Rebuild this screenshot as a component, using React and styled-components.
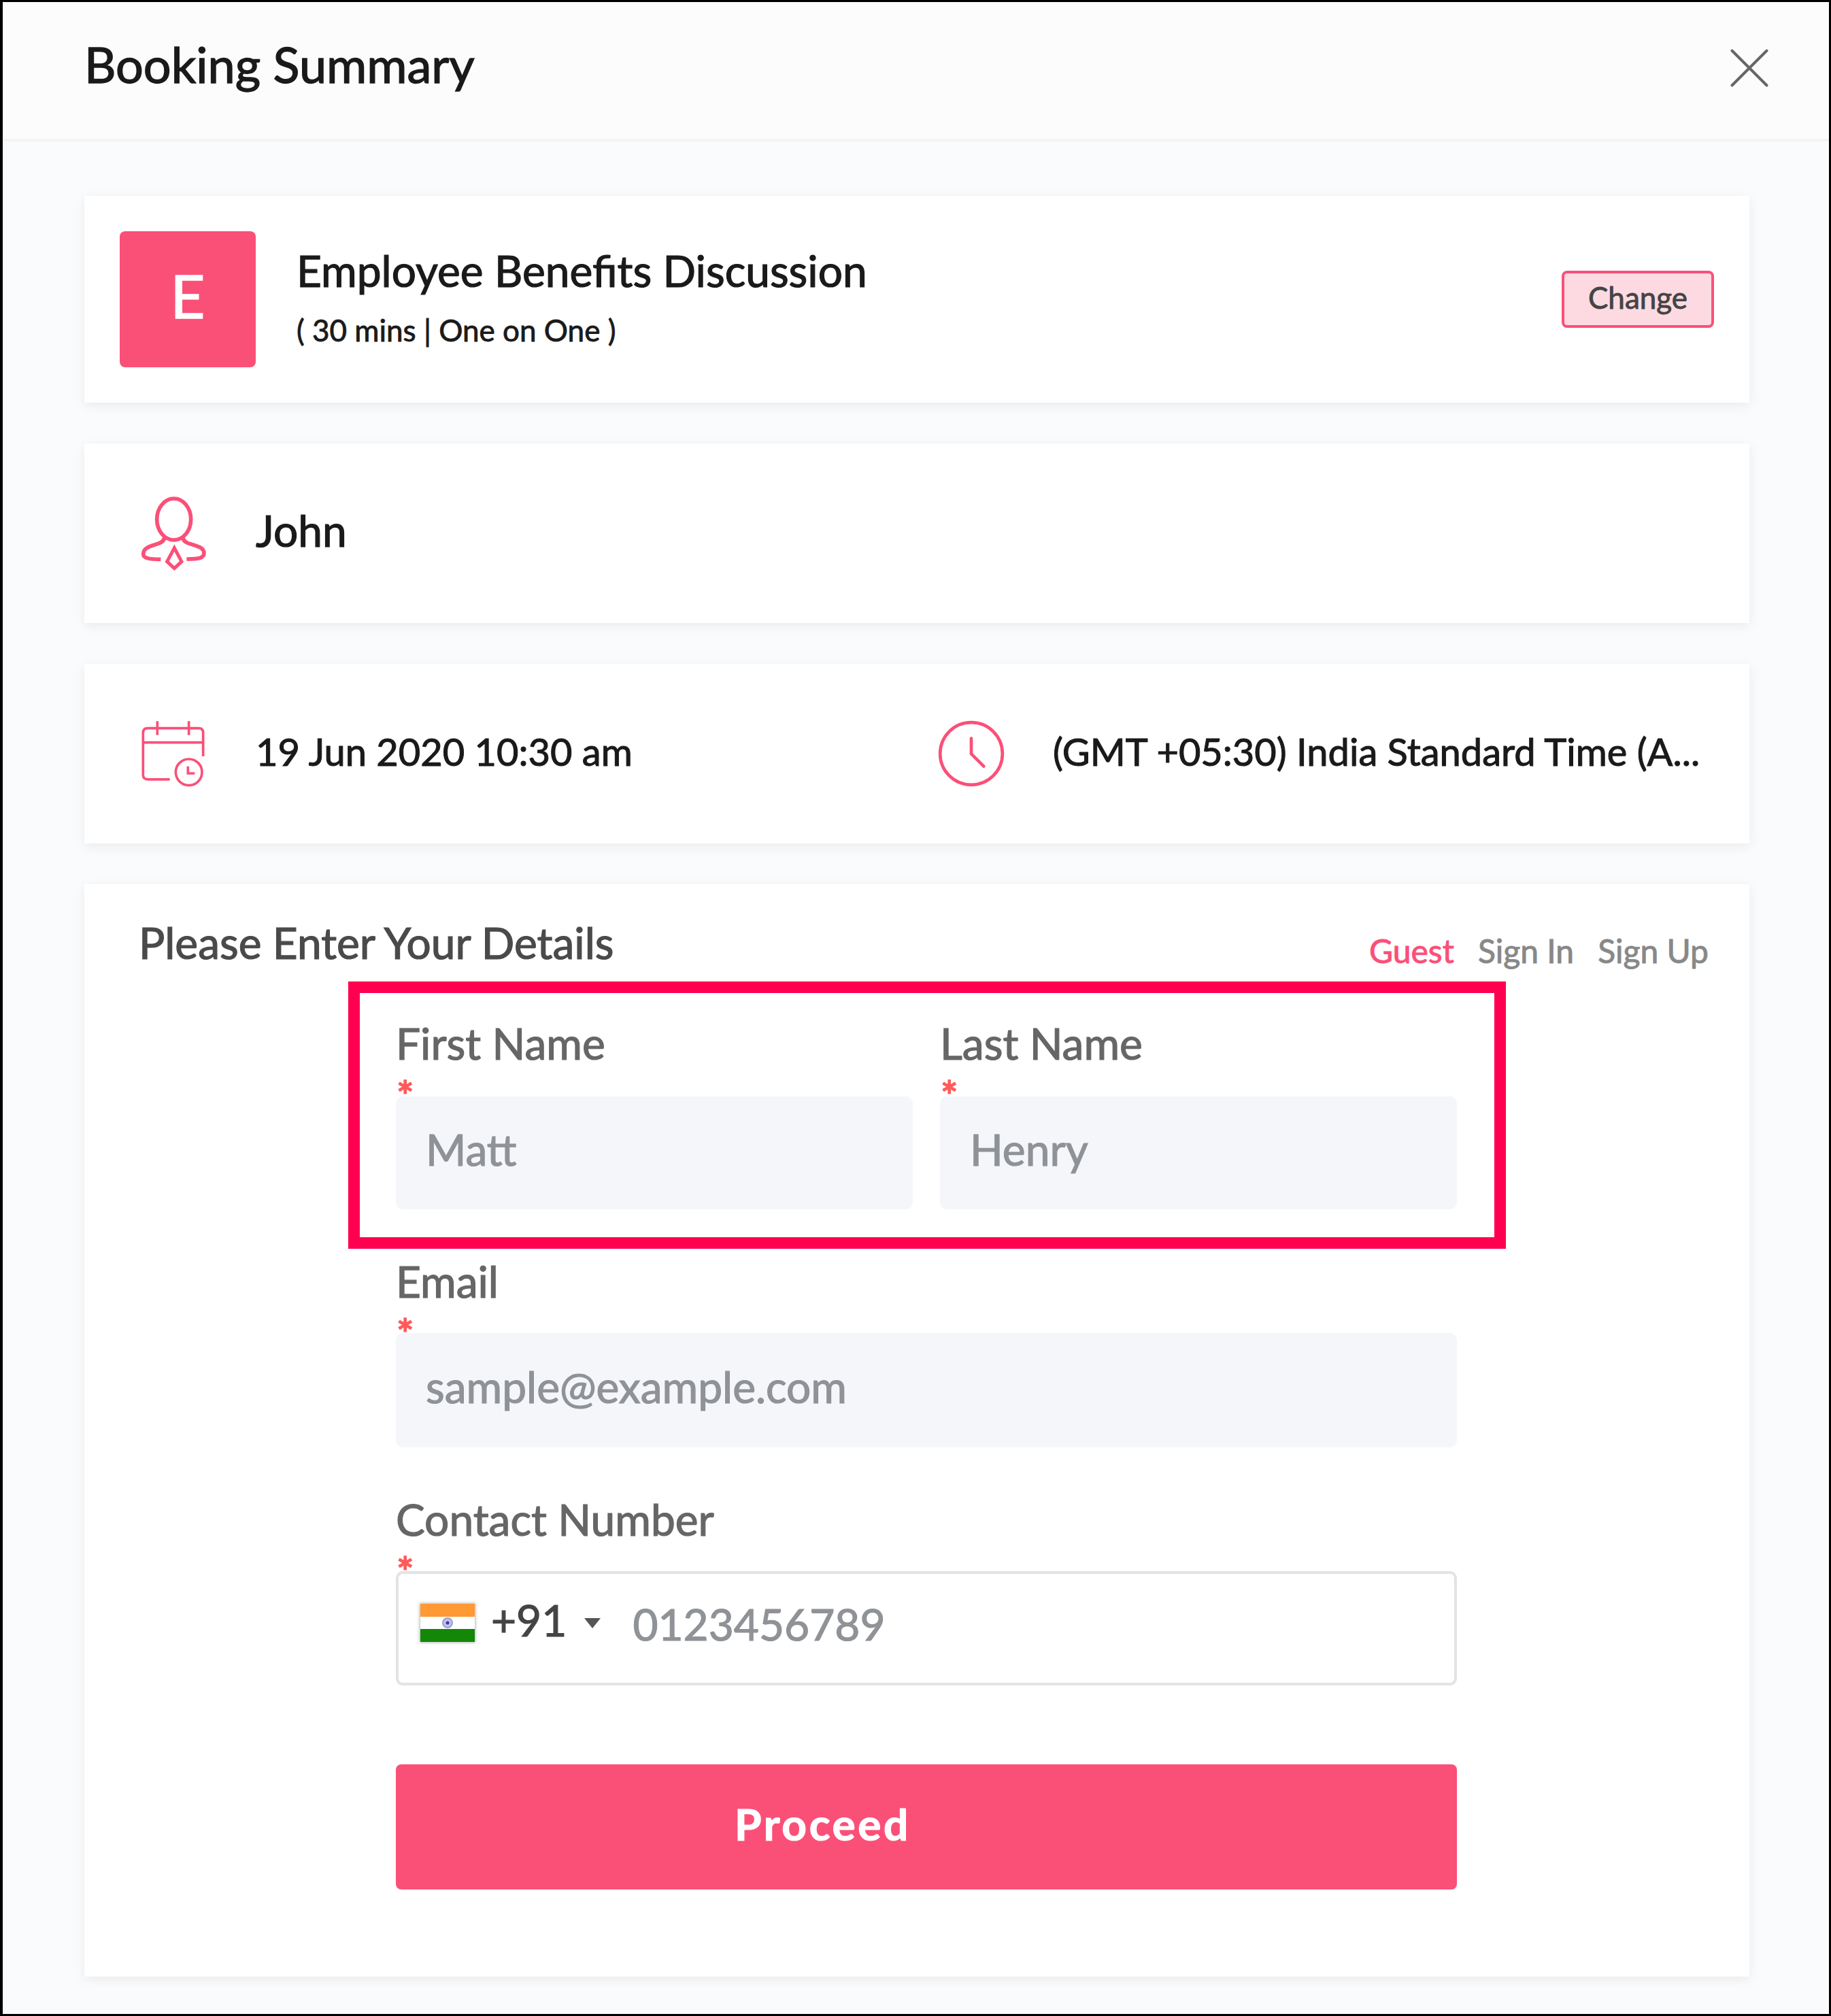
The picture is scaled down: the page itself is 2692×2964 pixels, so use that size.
import React from "react";
import styled, { createGlobalStyle } from "styled-components";

const tabs = ["Guest", "Sign In", "Sign Up"];

const PersonIcon = () => (
  <Icon viewBox="0 0 360 360" strokeWidth="17">
    <ellipse cx="182" cy="130.500" rx="75" ry="91.500" />
    <path d="M140 210C141 250 47 236 47 284C47 303 76 307 124 307" />
    <path d="M222 210C221 250 315 236 315 280C315 303 288 306 238 306" />
    <path d="M184 257L216 317L184 347L152 317Z" strokeWidth="15" />
  </Icon>
);

const CalendarIcon = () => (
  <Icon viewBox="0 0 360 360" strokeWidth="11" $offset="12px">
    <path d="M164 287.500H66Q46 287.500 46 267V82Q46 62 66 62H291Q311 62 311 82V186" />
    <path d="M46 125H311M109 31V92M248 31V92" />
    <circle cx="248" cy="256" r="58" />
    <path d="M244 230V261H274" />
  </Icon>
);

const ClockIcon = () => (
  <Icon viewBox="0 0 360 360" strokeWidth="14" $offset="8px">
    <circle cx="183" cy="180" r="137.500" />
    <path d="M183 113V181L238 236" strokeLinecap="round" />
  </Icon>
);

const IndiaFlag = () => (
  <Flag viewBox="0 0 80 56">
    <rect width="80" height="56" fill="#fff" />
    <rect width="80" height="19" fill="#ff9933" />
    <rect y="37" width="80" height="19" fill="#138808" />
    <circle cx="40" cy="28" r="7" fill="#c3c3e8" stroke="#9c9cd2" strokeWidth="2" />
    <circle cx="40" cy="28" r="2.500" fill="#3c3ca8" />
  </Flag>
);

const Field = ({ label, placeholder, first }) => (
  <FieldGroup>
    <Label>{label}</Label>
    <Required $first={first}>*</Required>
    <Input placeholder={placeholder} $short={first} />
  </FieldGroup>
);

const App = () => (
  <>
    <GlobalStyle />
    <Modal>
      <Header>
        <Title>Booking Summary</Title>
        <CloseButton aria-label="Close">
          <svg width="56" height="56" viewBox="0 0 56 56">
            <path
              d="M2.500 2.500L53.500 53.500M53.500 2.500L2.500 53.500"
              stroke="#666"
              strokeWidth="4"
              strokeLinecap="round"
            />
          </svg>
        </CloseButton>
      </Header>
      <Content>
        <ServiceCard>
          <Avatar>E</Avatar>
          <Service>
            <ServiceName>Employee Benefits Discussion</ServiceName>
            <ServiceInfo>( 30 mins | One on One )</ServiceInfo>
          </Service>
          <ChangeButton>Change</ChangeButton>
        </ServiceCard>
        <InfoCard>
          <InfoItem>
            <PersonIcon />
            <StaffName>John</StaffName>
          </InfoItem>
        </InfoCard>
        <InfoCard>
          <InfoItem>
            <CalendarIcon />
            <InfoText>19 Jun 2020 10:30 am</InfoText>
          </InfoItem>
          <InfoItem>
            <ClockIcon />
            <InfoText>(GMT +05:30) India Standard Time (A...</InfoText>
          </InfoItem>
        </InfoCard>
        <DetailsCard>
          <DetailsHeader>
            <DetailsTitle>Please Enter Your Details</DetailsTitle>
            <Tabs>
              {tabs.map(tab => (
                <Tab key={tab} $active={tab === "Guest"}>
                  {tab}
                </Tab>
              ))}
            </Tabs>
          </DetailsHeader>
          <Form>
            <NameRow>
              <Field label="First Name" placeholder="Matt" first />
              <Field label="Last Name" placeholder="Henry" first />
              <Highlight />
            </NameRow>
            <Field label="Email" placeholder="sample@example.com" />
            <FieldGroup>
              <Label>Contact Number</Label>
              <Required>*</Required>
              <PhoneBox>
                <IndiaFlag />
                <DialCode>+91</DialCode>
                <Caret viewBox="0 0 24 15">
                  <path d="M0 0H24L12 15Z" fill="#555" />
                </Caret>
                <PhoneInput placeholder="0123456789" />
              </PhoneBox>
            </FieldGroup>
            <ProceedButton>Proceed</ProceedButton>
          </Form>
        </DetailsCard>
      </Content>
    </Modal>
  </>
);

const GlobalStyle = createGlobalStyle`
  * {
    box-sizing: border-box;
    -webkit-text-stroke-width: 0.019em;
  }

  body {
    margin: 0;
    font-family: Lato, "Liberation Sans", sans-serif;
    color: #1a1a1a;
  }

  button,
  input {
    font-family: inherit;
    border: none;
    outline: none;
  }
`;

const Modal = styled.div`
  width: 2692px;
  height: 2964px;
  border: 3px solid #000;
  border-left-width: 4px;
  background: #fafbfd;
  overflow: hidden;
`;

const Header = styled.header`
  height: 205px;
  display: flex;
  justify-content: space-between;
  align-items: flex-start;
  padding: 48px 89px 0 120px;
  background: #fcfcfc;
  border-bottom: 4px solid #f3f3f3;
`;

const Title = styled.h1`
  margin: 0;
  font-size: 72px;
  line-height: 86px;
  font-weight: 400;
`;

const CloseButton = styled.button`
  display: flex;
  margin-top: 21px;
  padding: 0;
  background: transparent;
`;

const Content = styled.main`
  display: flex;
  flex-direction: column;
  gap: 60px;
  padding: 80px 117px 0 120px;
`;

const Card = styled.section`
  background: #fff;
  box-shadow: 0 4px 16px rgba(0, 0, 0, 0.07);
`;

const ServiceCard = styled(Card)`
  height: 304px;
  display: flex;
  align-items: center;
  padding: 0 52px;
`;

const Avatar = styled.div`
  width: 200px;
  height: 200px;
  margin-right: 60px;
  padding-bottom: 12px;
  display: flex;
  align-items: center;
  justify-content: center;
  border-radius: 8px;
  background: #fa5078;
  color: #fff;
  font-size: 88px;
`;

const Service = styled.div`
  flex: 1;
  margin-top: -4px;
`;

const ServiceName = styled.div`
  font-size: 64px;
  line-height: 77px;
`;

const ServiceInfo = styled.div`
  margin-top: 17px;
  font-size: 44px;
  line-height: 64px;
`;

const ChangeButton = styled.button`
  width: 224px;
  height: 84px;
  padding: 0 0 6px;
  border: 4px solid #fa5078;
  border-radius: 8px;
  background: #fddae2;
  color: #444;
  font-size: 44px;
`;

const InfoCard = styled(Card)`
  height: 264px;
  display: grid;
  grid-template-columns: 1172px 1fr;
  align-items: center;
  padding: 0 40px 8px 71px;
`;

const InfoItem = styled.div`
  display: flex;
  align-items: center;
  gap: 61px;
  white-space: nowrap;
`;

const Icon = styled.svg`
  width: 120px;
  height: 120px;
  flex: none;
  margin-top: ${props => props.$offset || 0};
  fill: none;
  stroke: #fa5078;
`;

const InfoText = styled.span`
  padding-top: 2px;
  font-size: 56px;
  line-height: 68px;
`;

const StaffName = styled(InfoText)`
  padding-top: 0;
  font-size: 64px;
`;

const DetailsCard = styled(Card)`
  height: 1606px;
  padding-top: 48px;
`;

const DetailsHeader = styled.div`
  height: 147px;
  display: flex;
  justify-content: space-between;
  align-items: flex-start;
  padding: 0 60px 0 80px;
`;

const DetailsTitle = styled.h2`
  margin: 0;
  color: #4a4a4a;
  font-size: 64px;
  line-height: 76px;
  font-weight: 400;
`;

const Tabs = styled.nav`
  display: flex;
  gap: 35px;
  margin-top: 21px;
`;

const Tab = styled.a`
  color: ${props => (props.$active ? "#fa5078" : "#888")};
  font-size: 48px;
  line-height: 58px;
`;

const Form = styled.div`
  width: 1560px;
  margin-left: 458px;
  display: flex;
  flex-direction: column;
  gap: 67px;
`;

const NameRow = styled.div`
  position: relative;
  display: grid;
  grid-template-columns: 1fr 1fr;
  gap: 40px;
`;

/* sits over the form, around both name fields */
const Highlight = styled.div`
  position: absolute;
  top: -52px;
  left: -70px;
  width: 1702px;
  height: 393px;
  border: 17px solid #ff0050;
  pointer-events: none;
`;

const FieldGroup = styled.div`
  display: flex;
  flex-direction: column;
`;

const Label = styled.label`
  padding-top: 1px;
  color: #666;
  font-size: 64px;
  line-height: 76px;
`;

const Required = styled.span`
  height: ${props => (props.$first ? "40px" : "38px")};
  padding-left: 1px;
  color: #ff5a5a;
  font-size: 60px;
  font-weight: 700;
  line-height: 77px;
`;

const Input = styled.input`
  width: 100%;
  height: ${props => (props.$short ? "166px" : "168px")};
  padding: 0 44px 12px;
  border-radius: 10px;
  background: #f5f6fa;
  font-size: 64px;

  &::placeholder {
    color: #8f9296;
    opacity: 1;
  }
`;

const PhoneBox = styled.div`
  height: 168px;
  display: flex;
  align-items: center;
  padding: 0 32px 18px;
  border: 4px solid #e3e3e3;
  border-radius: 10px;
`;

const Flag = styled.svg`
  width: 80px;
  height: 56px;
  margin-top: 2px;
  box-shadow: 0 0 4px 1px rgba(0, 0, 0, 0.3);
`;

const DialCode = styled.span`
  margin: 0 26px 8px 24px;
  color: #444;
  font-size: 64px;
`;

const Caret = styled.svg`
  width: 24px;
  height: 15px;
  margin-top: 2px;
`;

const PhoneInput = styled(Input)`
  flex: 1;
  width: auto;
  height: 90px;
  margin: 5px 0 0 47px;
  padding: 0;
  background: transparent;
`;

const ProceedButton = styled.button`
  height: 184px;
  margin-top: 49px;
  padding: 0 305px 10px 0;
  border-radius: 8px;
  background: #fa5078;
  color: #fff;
  font-size: 64px;
  font-weight: 700;
  letter-spacing: 3.6px;
`;

export default App;
